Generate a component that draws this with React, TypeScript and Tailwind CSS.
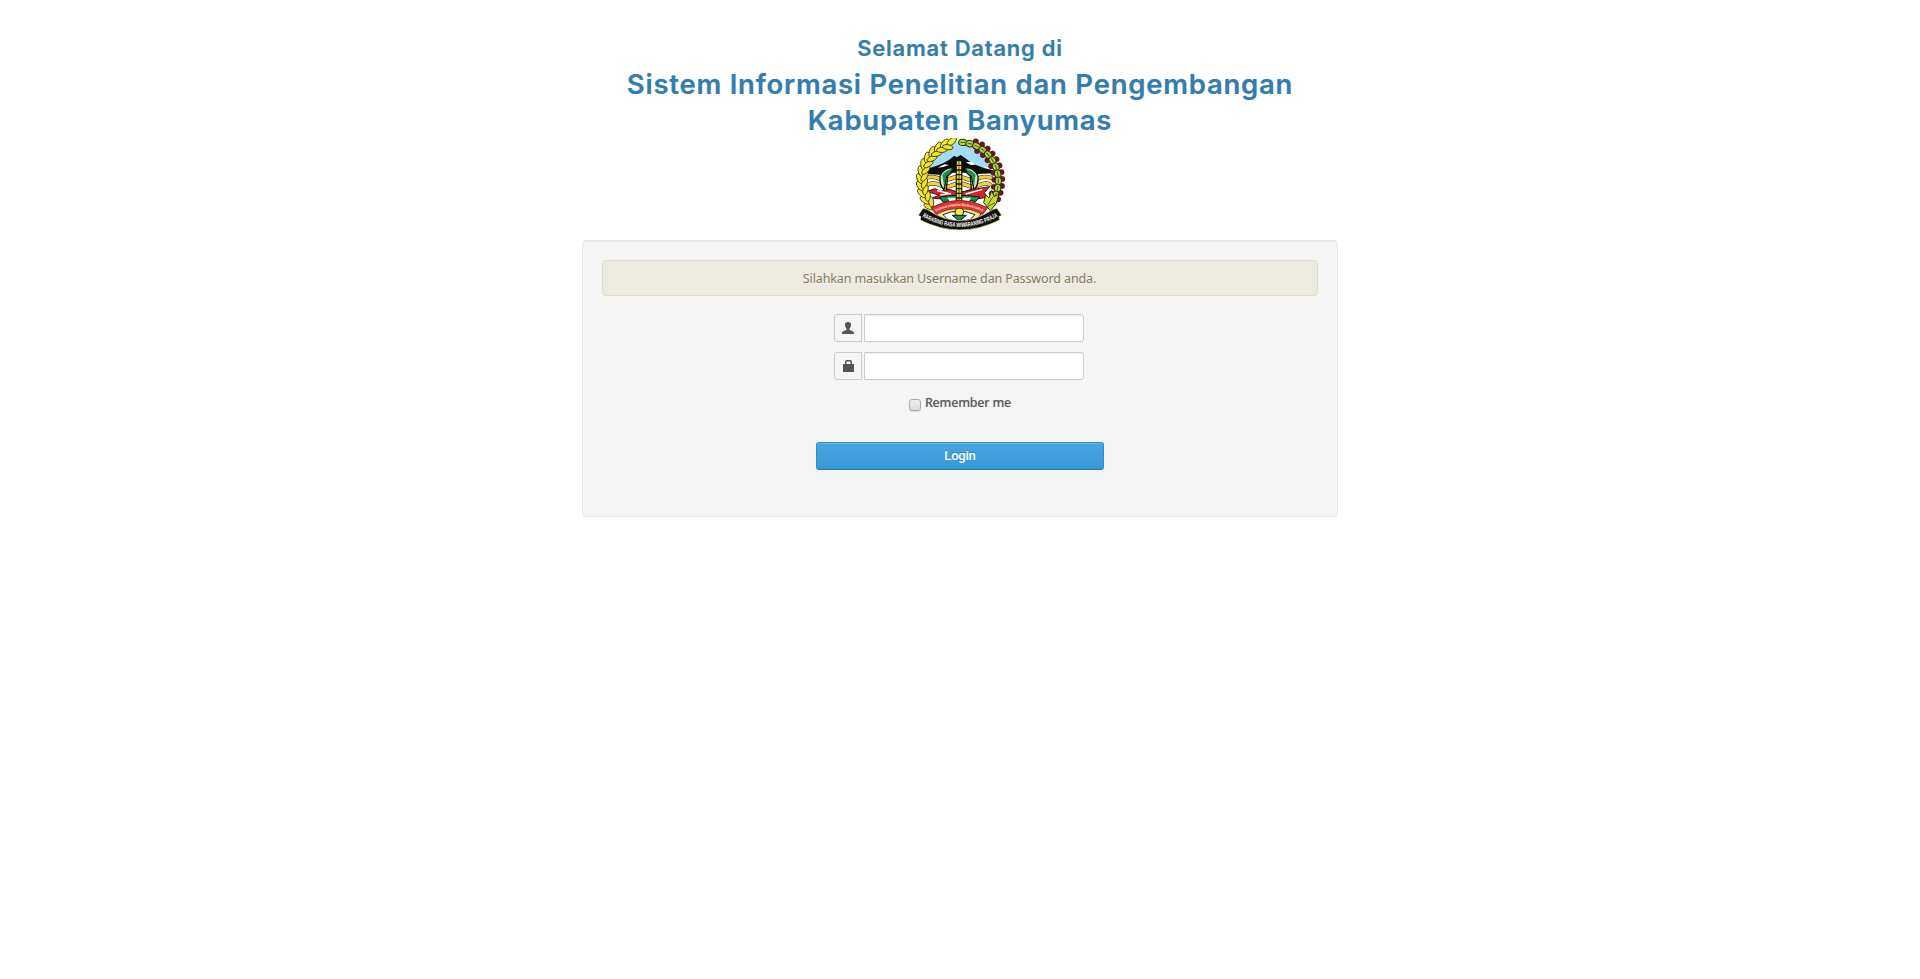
import React from 'react';

type Grain = { x: number; y: number; turn: number };

// Places items on a circle around the middle of the emblem; 0 degrees is the top, positive is clockwise.
const ring = (from: number, to: number, count: number, radius: number, tilt: number): Grain[] =>
  Array.from({ length: count }, (_, i) => {
    const deg = from + ((to - from) * i) / (count - 1);
    const a = (deg * Math.PI) / 180;
    return { x: 165 + Math.sin(a) * radius, y: 152 - Math.cos(a) * radius, turn: deg + tilt };
  });

const grainsOuter = ring(-130, -12, 12, 120, 0);
const grainsInner = ring(-126, -20, 11, 107, 0);
const cotton = ring(4, 112, 11, 115, 0);
const berriesOuter = ring(22, 116, 11, 127, 0);
const berriesInner = ring(30, 112, 8, 103, 0);

function Emblem() {
  return (
    <svg className="block h-[93px] w-[92px]" viewBox="27 24 276 279">
      <circle cx="165" cy="152" r="112" fill="#fff" />
      <path d="M72 110C92 58 130 33 165 32s72 24 98 76l-40 8-60-20-50 22z" fill="#a5dcf5" />
      <path d="M66 116Q120 103 148 77l8 5 11-7 12 8Q210 110 262 120l4 10-50 2-54-8-60 10-40-2z" fill="#0d0d0d" />
      <path d="M98 113l20-10 14 2-18 6zM182 97l16 8 14-1-12-9zM200 112l22 6" fill="#fff" />
      <g fill="none" stroke="#2b2712" strokeWidth="13">
        <path d="M60 145q20-9 40 0t40 0 40 0 40 0 42 0M64 165q20-9 40 0t40 0 40 0 40 0 34 0" />
      </g>
      <g fill="none" stroke="#f2cf3c" strokeWidth="10">
        <path d="M60 145q20-9 40 0t40 0 40 0 40 0 42 0M64 165q20-9 40 0t40 0 40 0 40 0 34 0" />
      </g>
      <path d="M105 138q12-26 40-25l-20 24-8 42q-14-12-12-41zM219 138q-12-26-40-25l20 24 8 42q14-12 12-41z" fill="#c9e8d0" stroke="#111" strokeWidth="4" />
      <path d="M112 134q12-15 32-17l-20 22-7 28zM212 134q-12-15-32-17l20 22 7 28z" fill="#159447" />
      <path d="M128 138l14-12h40l14 12 3 40q-38 18-75 0z" fill="none" stroke="#111" strokeWidth="4" />
      <path d="M66 184l24-8 16 8 28-6 28 10 56-12 36-6-16 18 10 14q-80 14-168 2l22-8z" fill="#d8232a" stroke="#222" strokeWidth="3" />
      <path d="M96 182l42 10M182 192l50-14M106 195l28-4" stroke="#fff" strokeWidth="4" />
      <path d="M104 201q56-10 120 0l-12 14q-50-14-98 2z" fill="#159447" stroke="#111" strokeWidth="3" />
      <path d="M128 203h70l-6 12q-30-6-58 0z" fill="#fff" />
      <path d="M162 86v140" stroke="#111" strokeWidth="20" />
      <path d="M162 94v128" stroke="#eee32d" strokeWidth="13" strokeDasharray="10 4" />
      <path d="M162 94v128" stroke="#111" strokeWidth="2" />

      <path d="M88 240q75-34 148 0l-20 30q-54 18-110 0z" fill="#f4ec8a" stroke="#111" strokeWidth="3" />
      <path d="M114 254q48-22 96 0l-14 14q-34 10-68 0z" fill="#fff" stroke="#222" strokeWidth="3" />
      <circle cx="163" cy="246" r="13" fill="#f5ea2e" stroke="#111" strokeWidth="3" />
      <path d="M142 256l21 18 21-18z" fill="#159447" stroke="#111" strokeWidth="3" />

      <path d="M140 40A115 115 0 0 0 82 232" fill="none" stroke="#3b3a10" strokeWidth="9" />
      {grainsOuter.map((g, i) => (
        <ellipse key={i} cx={g.x} cy={g.y} rx="8.500" ry="17" transform={`rotate(${g.turn + 62} ${g.x} ${g.y})`} fill="#f5ea2e" stroke="#333014" strokeWidth="2.5" />
      ))}
      {grainsInner.map((g, i) => (
        <ellipse key={i} cx={g.x} cy={g.y} rx="7.500" ry="16" transform={`rotate(${g.turn + 118} ${g.x} ${g.y})`} fill="#f0e22d" stroke="#333014" strokeWidth="2.5" />
      ))}
      {berriesOuter.concat(berriesInner).map((g, i) => (
        <circle key={i} cx={g.x} cy={g.y} r="8" fill="#761226" stroke="#22120f" strokeWidth="1.5" />
      ))}
      {cotton.map((g, i) => (
        <g key={i} transform={`rotate(${g.turn} ${g.x} ${g.y})`}>
          <ellipse cx={g.x} cy={g.y} rx="12" ry="9.500" fill="#b9d432" stroke="#252c10" strokeWidth="3" />
          <path d={`M${g.x - 7} ${g.y}h14`} stroke="#3d5a18" strokeWidth="3" />
        </g>
      ))}
      <path d="M236 218l6-24 10 10 8-22 8 18 14-8-8 28-18 22z" fill="#c8dc34" stroke="#23300f" strokeWidth="3" />
      <path d="M248 226l16-26M244 232l26-14" stroke="#3d5a18" strokeWidth="3" />

      <path d="M78 233Q162 189 248 233l-15 20Q162 217 93 253z" fill="#e3332b" stroke="#222" strokeWidth="2" />
      <path id="emblem-district" d="M88 247Q162 209 238 247" fill="none" />
      <text className="font-['Liberation_Sans'] text-[10px] font-bold" fill="#ffe9e2" textAnchor="middle">
        <textPath href="#emblem-district" startOffset="50%" textLength="146" lengthAdjust="spacingAndGlyphs">DAERAH KABUPATEN BANYUMAS</textPath>
      </text>

      <path d="M40 256l14-21 12 3q98 68 198 0l12-3 14 21-8 4 2 10q-120 60-238 0l2-10z" fill="#111" stroke="#e9df9a" strokeWidth="2" />
      <path id="emblem-motto" d="M52 258Q163 320 278 258" fill="none" />
      <text className="font-['Liberation_Sans'] text-[19px] font-bold" fill="#fff" textAnchor="middle" dy="2">
        <textPath href="#emblem-motto" startOffset="50%" textLength="236" lengthAdjust="spacingAndGlyphs">RARASING RASA WIWARANING PRAJA</textPath>
      </text>
    </svg>
  );
}

function UserIcon() {
  return (
    <svg className="h-[14px] w-[14px]" viewBox="0 0 14 14" fill="#555">
      <path d="M4 3.5C4 1.8 5 1 7 1s3 .8 3 2.500c0 1.700-.5 3.200-1.500 4.200v1c.6.8 4.500 1.300 4.500 3.300v1H1v-1c0-2 3.900-2.500 4.500-3.300v-1C4.500 6.700 4 5.200 4 3.500z" />
    </svg>
  );
}

function LockIcon() {
  return (
    <svg className="h-[14px] w-[14px]" viewBox="0 0 14 14" fill="#555">
      <path fillRule="evenodd" d="M2 5h2V3q0-2 2-2h3q2 0 2 2v2h2v8H2zM5.500 5h4V3.300q0-.8-.8-.8H6.300q-.8 0-.8.8z" />
    </svg>
  );
}

function Field({ icon, type, label }: { icon: React.ReactNode; type: string; label: string }) {
  return (
    <div className="flex gap-[2px]">
      <span className="flex h-7 w-7 items-center justify-center rounded-l-[3px] border border-[#ccc] bg-[#f5f5f5]">{icon}</span>
      <input
        type={type}
        aria-label={label}
        className="h-7 w-[220px] rounded-r-[3px] border border-[#ccc] bg-white px-1.5 shadow-[inset_0_1px_1px_rgba(0,0,0,0.075)] outline-none"
      />
    </div>
  );
}

export default function App() {
  return (
    <main className="flex min-h-screen flex-col items-center bg-white font-['Noto_Sans',sans-serif]">
      <h1 className="pt-[30px] text-center font-[Inter,sans-serif] text-[27.5px] leading-9 font-semibold tracking-[0.76px] text-[#327eae] [text-shadow:0_0_1px_#bbb]">
        <span className="block text-[22px] leading-9">Selamat Datang di</span>
        <span className="block">Sistem Informasi Penelitian dan Pengembangan</span>
        <span className="block">Kabupaten Banyumas</span>
      </h1>
      <Emblem />

      <form className="mt-[9px] flex h-[277px] w-[756px] flex-col items-center rounded border border-[#e8e8e8] bg-[#f5f5f5] p-[19px] shadow-[inset_0_1px_1px_rgba(0,0,0,0.05)]">
        <div className="h-9 w-full rounded border border-[#e0dac8] bg-[#edeae2] pr-[35px] pl-[14px] text-center text-[12.5px] leading-[35px] tracking-[-0.12px] text-[#857b5c] [text-shadow:0_1px_0_rgba(255,255,255,0.5)]">
          Silahkan masukkan Username dan Password anda.
        </div>
        <div className="mt-[18px] mr-[2px] flex flex-col gap-[10px]">
          <Field icon={<UserIcon />} type="text" label="Username" />
          <Field icon={<LockIcon />} type="password" label="Password" />
        </div>
        <label className="mt-3 flex h-[22px] items-center gap-1 text-[12.5px] font-medium tracking-[-0.2px] text-[#5a5a5a] [text-shadow:0_0_1px_#ccc]">
          <input
            type="checkbox"
            className="mt-[4px] h-3 w-3 appearance-none rounded-[3px] border border-[#aaa] bg-linear-to-b from-[#eee] to-[#dcdcdc] shadow-[0_1px_1px_rgba(0,0,0,0.1)]"
          />
          Remember me
        </label>
        <button
          type="button"
          className="mt-7 h-7 w-72 rounded-[3px] border border-[#338cc0] border-b-[#2a78a8] bg-linear-to-b from-[#4aa5de] to-[#3498d8] font-['Roboto',sans-serif] text-[13px] leading-[26px] font-medium tracking-[-0.2px] text-white shadow-[inset_0_1px_0_rgba(255,255,255,0.2)] [text-shadow:0_-1px_0_rgba(0,0,0,0.25)]"
        >
          Login
        </button>
      </form>
    </main>
  );
}
